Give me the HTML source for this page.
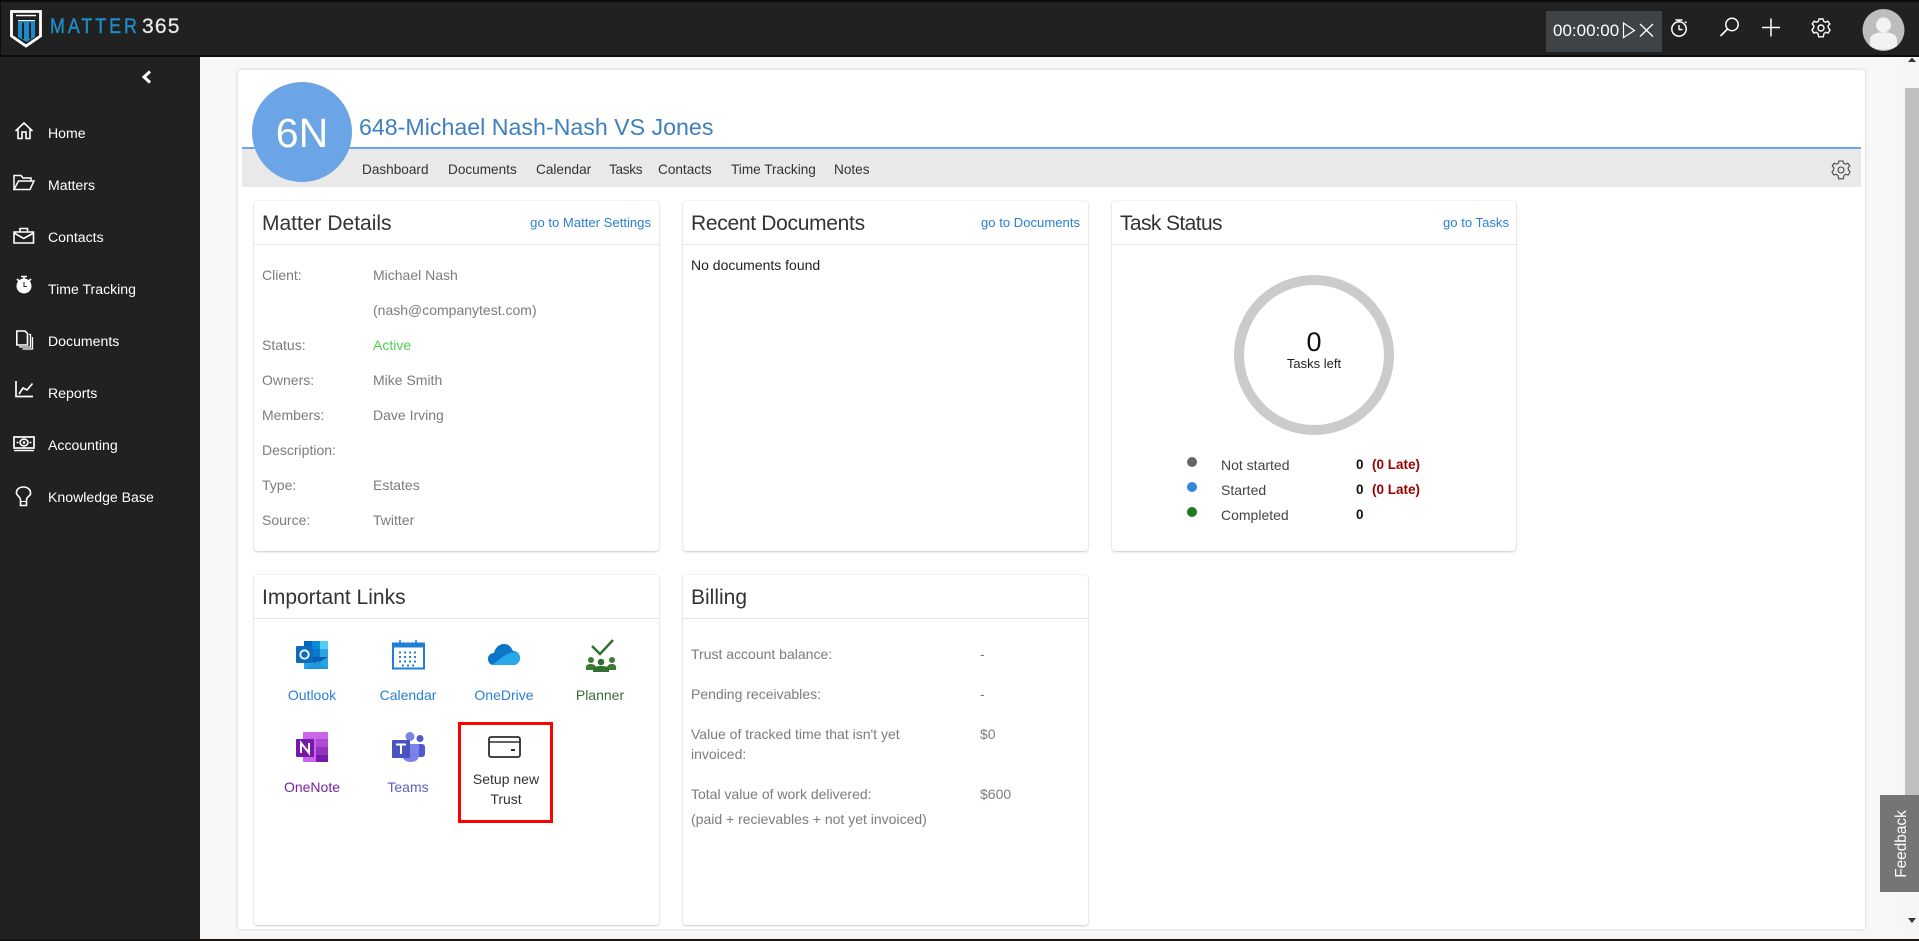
<!DOCTYPE html>
<html><head><meta charset="utf-8"><title>Matter 365</title>
<style>
*{box-sizing:border-box}
html,body{margin:0;padding:0;width:1919px;height:941px;overflow:hidden;background:#f7f7f7;font-family:"Liberation Sans",Arial,sans-serif}
.b{position:absolute}
.t{position:absolute;white-space:nowrap;line-height:20px;height:20px;font-size:14px}
.s{color:#fff;left:48px;font-size:14.1px}
.n{color:#333;font-size:13.6px;top:160px}
.h{color:#333;font-size:21px;line-height:28px;height:28px}
.l{color:#2a7fd6;font-size:13.1px;text-align:right}
.g{color:#7c7c7c;font-weight:normal;margin-top:-1px}
.c{background:#fff;border-radius:3px;box-shadow:0 1px 2px rgba(0,0,0,.18),0 0 1px rgba(0,0,0,.22)}
.d{position:absolute;height:1px;background:#e6e6e6}
.m{text-align:center;width:96px}
svg{position:absolute;left:0;top:0}
</style></head><body>
<div class="b" style="left:0;top:0;width:1919px;height:57px;background:#212121;border-top:2px solid #0c0c0c;border-bottom:2px solid #0c0c0c;border-left:1px solid #0c0c0c"></div>
<div class="b" style="left:0;top:57px;width:200px;height:884px;background:#212121"></div>
<div class="b" style="left:200px;top:939px;width:1719px;height:2px;background:#1a1410"></div>
<div class="b" style="left:0;top:939px;width:200px;height:2px;background:#111"></div>
<div class="b" style="left:1903px;top:57px;width:16px;height:872px;background:#f5f5f5"></div>
<div class="b" style="left:1905px;top:88px;width:14px;height:707px;background:#bfbfbf"></div>
<div class="b" style="left:238px;top:70px;width:1627px;height:859px;background:#fff;box-shadow:0 0 3px rgba(0,0,0,.18);border-radius:3px 3px 0 0"></div>
<div class="b" style="left:242px;top:147px;width:1619px;height:2px;background:#6ca5e5"></div>
<div class="b" style="left:242px;top:149px;width:1619px;height:38px;background:#e9e9e9"></div>
<div class="b" style="left:1546px;top:11px;width:116px;height:41px;background:#3d4347"></div>

<div class="b c" style="left:254px;top:201px;width:405px;height:350px"></div>
<div class="b c" style="left:683px;top:201px;width:405px;height:350px"></div>
<div class="b c" style="left:1112px;top:201px;width:404px;height:350px"></div>
<div class="b c" style="left:254px;top:575px;width:405px;height:350px"></div>
<div class="b c" style="left:683px;top:575px;width:405px;height:350px"></div>
<div class="d" style="left:254px;top:244px;width:405px"></div>
<div class="d" style="left:683px;top:244px;width:405px"></div>
<div class="d" style="left:1112px;top:244px;width:404px"></div>
<div class="d" style="left:254px;top:618px;width:405px"></div>
<div class="d" style="left:683px;top:618px;width:405px"></div>

<svg width="1919" height="941" viewBox="0 0 1919 941" fill="none">
<!-- logo -->
<path d="M11.500 11.500H40.500V36L26 46L11.500 36Z" stroke="#fff" stroke-width="2.800"/>
<path d="M16 15.500H36" stroke="#fff" stroke-width="1.600"/>
<path d="M18 20H35V37L26.500 42L18 37Z" fill="#1e8bc9"/>
<path d="M23 22.500V39M30 22.500V39" stroke="#212121" stroke-width="2"/>
<path d="M18 20.500H35" stroke="#fff" stroke-width="1"/>
<!-- chevron -->
<path d="M150 71.500L144 77L150 82.500" stroke="#fff" stroke-width="3"/>
<!-- home -->
<path d="M15.500 131L24 123L32.500 131M18 129V138.500H22V132H26V138.500H30V129" stroke="#fff" stroke-width="1.600"/>
<!-- folder -->
<path d="M14 189.500V175.500H21L23 178H31V181M14 189.500H30L34 181H18.500L14 189.500Z" stroke="#fff" stroke-width="1.500"/>
<!-- briefcase -->
<path d="M14 232H33.500V243H14ZM20 232V228.500H27.500V232M14 233L23.700 238.500L33.500 233" stroke="#fff" stroke-width="1.600"/>
<!-- stopwatch -->
<circle cx="24" cy="286" r="7.500" fill="#fff"/><path d="M21 276.500H27M24 276.500V279M17 279L19 281M31 279L29 281" stroke="#fff" stroke-width="1.600"/><path d="M24 282V286.500H27" stroke="#212121" stroke-width="1"/>
<!-- documents -->
<path d="M16.800 331H25L27.500 333.500V345H16.800Z" stroke="#fff" stroke-width="1.600"/><path d="M29 334.500H30.500V347H20V346M32.500 337V349H22.500" stroke="#fff" stroke-width="1.300"/>
<!-- reports -->
<path d="M16 381V396.500H33" stroke="#fff" stroke-width="1.700"/><path d="M19 394L23 388L27 390L32.500 383.500" stroke="#fff" stroke-width="1.700"/>
<!-- accounting -->
<rect x="14" y="437" width="20" height="11" stroke="#fff" stroke-width="1.700"/><ellipse cx="24" cy="442.500" rx="4" ry="3.400" stroke="#fff" stroke-width="1.600"/><circle cx="24" cy="442.500" r="1.300" fill="#fff"/><path d="M14 450.500H34" stroke="#fff" stroke-width="1.400"/><circle cx="17.500" cy="442.500" r="1" fill="#fff"/><circle cx="30.500" cy="442.500" r="1" fill="#fff"/>
<!-- bulb -->
<path d="M20.500 500C20.500 497 16.500 495 16.500 493.500C16 489.500 19 487 23.500 487C28 487 31 490 30.500 494C30 496 26.500 497 26.500 500V505.500H20.500Z" stroke="#fff" stroke-width="1.600"/><path d="M21 501.500H26" stroke="#fff" stroke-width="1"/>
<!-- timer icons -->
<path d="M1623.500 23L1634.500 30.500L1623.500 37.500Z" stroke="#fff" stroke-width="1.200"/>
<path d="M1640 24L1653 36.500M1653 24L1640 36.500" stroke="#fff" stroke-width="1.300"/>
<circle cx="1679" cy="29" r="7.200" stroke="#fff" stroke-width="1.500"/><path d="M1675.500 20H1682.500M1679 20V22M1679 25V29.500H1682.500M1685 21.500L1686.500 23" stroke="#fff" stroke-width="1.400"/>
<circle cx="1732" cy="24.500" r="6.200" stroke="#fff" stroke-width="1.500"/><path d="M1727.500 29L1720.500 36" stroke="#fff" stroke-width="1.600"/>
<path d="M1762 27.500H1780M1771 18.500V36.500" stroke="#fff" stroke-width="1.500"/>
<g stroke="#fff" stroke-width="1.400"><circle cx="1821" cy="28" r="3"/><path d="M1819 19H1823L1823.600 21.300L1825.500 22.200L1827.800 21.200L1829.800 24L1828.100 25.800L1828.400 28L1830 29.900L1828.200 33L1825.800 32.300L1824 33.500L1823.300 36.800H1818.700L1818 33.500L1816.200 32.300L1813.800 33L1812 29.900L1813.600 28L1813.900 25.800L1812.200 24L1814.200 21.200L1816.500 22.200L1818.400 21.300Z"/></g>
<circle cx="1883.500" cy="30" r="21" fill="#bdbdbd"/><circle cx="1883.500" cy="25" r="7.500" fill="#f2f2f2"/><path d="M1870 46V40C1870 35 1875 33 1880 32.500H1887C1892 33 1897 35 1897 40V46C1890 51 1877 51 1870 46Z" fill="#f2f2f2"/>
<path d="M1912 57.500L1916 62H1908Z" fill="#333"/>
<path d="M1908 918H1916L1912 923Z" fill="#333"/>
<!-- avatar circle -->
<circle cx="302" cy="132" r="50" fill="#6ca5e5"/>
<!-- settings gear -->
<g stroke="#444" stroke-width="1.100" transform="translate(20 142)"><circle cx="1821" cy="28" r="3"/><path d="M1819 19H1823L1823.600 21.300L1825.500 22.200L1827.800 21.200L1829.800 24L1828.100 25.800L1828.400 28L1830 29.900L1828.200 33L1825.800 32.300L1824 33.500L1823.300 36.800H1818.700L1818 33.500L1816.200 32.300L1813.800 33L1812 29.900L1813.600 28L1813.900 25.800L1812.200 24L1814.200 21.200L1816.500 22.200L1818.400 21.300Z"/></g>
<!-- donut -->
<circle cx="1314" cy="355" r="75" stroke="#cbcbcb" stroke-width="10"/>
<circle cx="1192" cy="462" r="5" fill="#666"/>
<circle cx="1192" cy="487" r="5" fill="#2f86dc"/>
<circle cx="1192" cy="512" r="5" fill="#1c7c1c"/>
<!-- outlook -->
<rect x="304" y="641" width="24" height="23" fill="#0a5fb0"/><rect x="304" y="641" width="8" height="8" fill="#0068b8"/><rect x="312" y="641" width="8" height="8" fill="#0a8ad8"/><rect x="320" y="641" width="8" height="8" fill="#4fd0f5"/><rect x="312" y="649" width="8" height="8" fill="#0a78cc"/><rect x="320" y="649" width="8" height="8" fill="#2aa3e0"/><path d="M304 657L316 664L328 657V669H304Z" fill="#29a4e6"/><path d="M304 669L318 661L328 669Z" fill="#1c9ae0"/>
<rect x="296" y="646" width="17" height="17" rx="1" fill="#0f6cbd"/><circle cx="304.500" cy="654.500" r="4.200" stroke="#fff" stroke-width="1.800"/>
<!-- calendar -->
<rect x="393" y="643.500" width="31" height="25" stroke="#1f7fd6" stroke-width="2"/><rect x="393" y="643" width="31" height="4.500" fill="#1f7fd6"/><path d="M400 640V646M416 640V646" stroke="#1f7fd6" stroke-width="1.600"/>
<path d="M399 652.500H418M399 657H418M399 661.500H418M402 665.500H415" stroke="#2a7fd6" stroke-width="2" stroke-dasharray="2 3"/>
<!-- onedrive -->
<path d="M494 665C489 665 488 661 488 659C488 655 491 653 494 653C495 648 499 644 504 644C509 644 511 647 513 651C517 651 520 654 520 658C520 662 517 665 513 665Z" fill="#0a74c8"/>
<path d="M492 665L505 655C509 653 512 652 516 652C519 654 520 656 520 658C520 662 517 665 513 665Z" fill="#27a8ea"/>
<path d="M496 653C499 649 503 649 506 650L513 651L505 655.500Z" fill="#1178c4"/>
<!-- planner -->
<path d="M592 646L600 654L613 640" stroke="#2f6f2f" stroke-width="2.400"/>
<circle cx="591" cy="660" r="3" fill="#3d7a32"/><circle cx="601" cy="662" r="3.300" fill="#2f6f2f"/><circle cx="612" cy="660" r="3" fill="#3d7a32"/>
<path d="M586 670V667C586 663 595 663 596 667V670ZM607 670V667C608 663 616 663 616 667V670Z" fill="#3d7a32"/><path d="M593 672V669C593 665 609 665 609 669V672Z" fill="#2f6f2f"/>
<!-- onenote -->
<rect x="303" y="732" width="25" height="30" rx="1" fill="#ca64ea"/><rect x="316" y="739" width="12" height="8" fill="#ae4bd5"/><rect x="316" y="747" width="12" height="8" fill="#9332bf"/><rect x="316" y="755" width="12" height="7" fill="#7719aa"/>
<rect x="296" y="739" width="18" height="18" rx="1" fill="#7719aa"/><path d="M301 753V743L309 753V743" stroke="#fff" stroke-width="2"/>
<!-- teams -->
<circle cx="410" cy="736.500" r="4.500" fill="#7b83eb"/><circle cx="420" cy="738.500" r="3.500" fill="#5059c9"/>
<rect x="414" y="744" width="11" height="13" rx="3" fill="#5059c9"/><path d="M402 744H419V755C419 760 415 762 410.500 762C406 762 402 759 402 755Z" fill="#7b83eb"/>
<rect x="392" y="740" width="18" height="18" rx="1" fill="#4b53bc"/><path d="M396 744.500H406M401 744.500V754" stroke="#fff" stroke-width="2"/>
<!-- card -->
<rect x="489" y="737" width="31" height="20" rx="2" stroke="#2d2d2d" stroke-width="1.800"/><path d="M489 742H520" stroke="#2d2d2d" stroke-width="1.500"/><rect x="511" y="749" width="4" height="2" fill="#2d2d2d"/>
<rect x="459.500" y="723.500" width="92" height="98" stroke="#f00" stroke-width="3"/>
</svg>

<!-- logo text -->
<div class="t" style="left:50px;top:16px;height:22px;line-height:22px;font-size:21px;letter-spacing:3.500px;color:#1f8cc6;transform:scaleX(.85);transform-origin:left center;-webkit-text-stroke:.4px #1f8cc6">MATTER</div>
<div class="t" style="left:142px;top:16px;height:22px;line-height:22px;font-size:21px;letter-spacing:1.200px;color:#e8e8e8;-webkit-text-stroke:.3px #e8e8e8">365</div>

<div class="t s" style="top:123px">Home</div>
<div class="t s" style="top:175px">Matters</div>
<div class="t s" style="top:227px">Contacts</div>
<div class="t s" style="top:279px">Time Tracking</div>
<div class="t s" style="top:331px">Documents</div>
<div class="t s" style="top:383px">Reports</div>
<div class="t s" style="top:435px">Accounting</div>
<div class="t s" style="top:487px">Knowledge Base</div>

<div class="t" style="left:1553px;top:20px;font-size:17px;height:22px;line-height:22px;color:#fff">00:00:00</div>

<div class="t" style="left:252px;width:100px;top:112px;height:42px;line-height:42px;text-align:center;font-size:41px;color:#fff">6N</div>
<div class="t" style="left:359px;top:112px;height:30px;line-height:30px;font-size:23.200px;color:#3f7fbf">648-Michael Nash-Nash VS Jones</div>

<div class="t n" style="left:362px">Dashboard</div>
<div class="t n" style="left:448px">Documents</div>
<div class="t n" style="left:536px">Calendar</div>
<div class="t n" style="left:609px;letter-spacing:-.3px">Tasks</div>
<div class="t n" style="left:658px">Contacts</div>
<div class="t n" style="left:731px">Time Tracking</div>
<div class="t n" style="left:834px">Notes</div>

<div class="t h" style="left:262px;top:210px">Matter Details</div>
<div class="t h" style="left:691px;top:210px;letter-spacing:-.3px">Recent Documents</div>
<div class="t h" style="left:1120px;top:210px;letter-spacing:-.6px">Task Status</div>
<div class="t h" style="left:262px;top:584px">Important Links</div>
<div class="t h" style="left:691px;top:584px">Billing</div>
<div class="t l" style="right:1268px;top:213px">go to Matter Settings</div>
<div class="t l" style="right:839px;top:213px">go to Documents</div>
<div class="t l" style="right:410px;top:213px">go to Tasks</div>

<div class="t g" style="left:262px;top:266px">Client:</div><div class="t g" style="left:373px;top:266px">Michael Nash</div>
<div class="t g" style="left:373px;top:301px">(nash@companytest.com)</div>
<div class="t g" style="left:262px;top:336px">Status:</div><div class="t g" style="left:373px;top:336px;color:#4fd04f">Active</div>
<div class="t g" style="left:262px;top:371px">Owners:</div><div class="t g" style="left:373px;top:371px">Mike Smith</div>
<div class="t g" style="left:262px;top:406px">Members:</div><div class="t g" style="left:373px;top:406px">Dave Irving</div>
<div class="t g" style="left:262px;top:441px">Description:</div>
<div class="t g" style="left:262px;top:476px">Type:</div><div class="t g" style="left:373px;top:476px">Estates</div>
<div class="t g" style="left:262px;top:511px">Source:</div><div class="t g" style="left:373px;top:511px">Twitter</div>

<div class="t" style="left:691px;top:255px;color:#222">No documents found</div>

<div class="t" style="left:1264px;width:100px;top:328px;height:28px;line-height:28px;text-align:center;font-size:27px;color:#111">0</div>
<div class="t" style="left:1264px;width:100px;top:354px;text-align:center;color:#222;font-size:13px">Tasks left</div>
<div class="t" style="left:1221px;top:455px;color:#444">Not started</div><div class="t" style="left:1356px;top:455px;color:#111;font-weight:bold;font-size:13.500px">0</div><div class="t" style="left:1372px;top:455px;color:#990000;font-weight:bold;font-size:13.500px">(0 Late)</div>
<div class="t" style="left:1221px;top:480px;color:#444">Started</div><div class="t" style="left:1356px;top:480px;color:#111;font-weight:bold;font-size:13.500px">0</div><div class="t" style="left:1372px;top:480px;color:#990000;font-weight:bold;font-size:13.500px">(0 Late)</div>
<div class="t" style="left:1221px;top:505px;color:#444">Completed</div><div class="t" style="left:1356px;top:505px;color:#111;font-weight:bold;font-size:13.500px">0</div>

<div class="t m" style="left:264px;top:685px;color:#2a7fd6">Outlook</div>
<div class="t m" style="left:360px;top:685px;color:#2a7fd6">Calendar</div>
<div class="t m" style="left:456px;top:685px;color:#2a7fd6">OneDrive</div>
<div class="t m" style="left:552px;top:685px;color:#3a6e3a">Planner</div>
<div class="t m" style="left:264px;top:777px;color:#7b1fa2">OneNote</div>
<div class="t m" style="left:360px;top:777px;color:#5b62b8">Teams</div>
<div class="t m" style="left:458px;top:769px;color:#333">Setup new</div>
<div class="t m" style="left:458px;top:789px;color:#333">Trust</div>

<div class="t g" style="left:691px;top:645px">Trust account balance:</div><div class="t g" style="left:980px;top:645px">-</div>
<div class="t g" style="left:691px;top:685px">Pending receivables:</div><div class="t g" style="left:980px;top:685px">-</div>
<div class="t g" style="left:691px;top:725px">Value of tracked time that isn't yet</div><div class="t g" style="left:980px;top:725px">$0</div>
<div class="t g" style="left:691px;top:745px">invoiced:</div>
<div class="t g" style="left:691px;top:785px">Total value of work delivered:</div><div class="t g" style="left:980px;top:785px">$600</div>
<div class="t g" style="left:691px;top:810px">(paid + recievables + not yet invoiced)</div>

<div class="b" style="left:1880px;top:795px;width:39px;height:97px;background:#757575"></div>
<div class="t" style="left:1853px;top:834px;width:98px;text-align:center;color:#fff;font-size:15.400px;transform:rotate(-90deg)">Feedback</div>
</body></html>
